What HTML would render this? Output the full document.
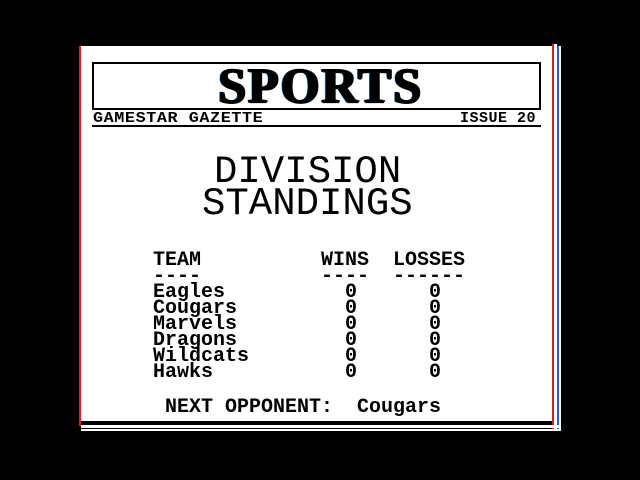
<!DOCTYPE html>
<html><head><style>
html,body{margin:0;padding:0;background:#000;width:640px;height:480px;overflow:hidden;position:relative}
div{position:absolute}
.m{font-family:"Liberation Mono",monospace;color:#000;white-space:pre;line-height:1}
.t{font-size:20px;font-weight:bold}
</style></head><body>
<div style="left:79px;top:46px;width:2px;height:380px;background:#e02020"></div>
<div style="left:81px;top:46px;width:471px;height:375px;background:#fff"></div>
<div style="left:552px;top:44px;width:2px;height:385px;background:#d02020"></div>
<div style="left:554px;top:44px;width:3px;height:385px;background:#fff"></div>
<div style="left:557px;top:46px;width:2px;height:383px;background:#2060e0"></div>
<div style="left:559px;top:46px;width:2px;height:383px;background:#fff"></div>
<div style="left:81px;top:425px;width:480px;height:3px;background:#fff"></div>
<div style="left:81px;top:429px;width:480px;height:2px;background:#fff"></div>

<div style="left:92px;top:62px;width:445px;height:44px;border:2px solid #000"></div>
<div style="left:200px;top:60px;width:240px;text-align:center;font-family:'Liberation Serif',serif;font-weight:bold;font-size:50px;line-height:50px;letter-spacing:2px;color:#000;-webkit-text-stroke:1px #000;text-shadow:2px 0 0 #000,-1px 0 0 #3af,1px 1px 0 #000">SPORTS</div>
<div class="m" style="left:93px;top:111px;font-size:15px;font-weight:bold;letter-spacing:0.5px;transform:scaleX(1.12);transform-origin:left">GAMESTAR GAZETTE</div>
<div class="m" style="left:460px;top:111px;font-size:15px;font-weight:bold;letter-spacing:0.5px">ISSUE 20</div>
<div style="left:92px;top:125px;width:449px;height:2px;background:#000"></div>

<div class="m" style="left:214px;top:153px;font-size:39px">DIVISION</div>
<div class="m" style="left:202px;top:185px;font-size:39px">STANDINGS</div>

<div class="m t" style="left:153px;top:253px;line-height:16px">TEAM          WINS  LOSSES
----          ----  ------
Eagles          0      0
Cougars         0      0
Marvels         0      0
Dragons         0      0
Wildcats        0      0
Hawks           0      0</div>
<div class="m t" style="left:165px;top:398px">NEXT OPPONENT:  Cougars</div>
</body></html>
